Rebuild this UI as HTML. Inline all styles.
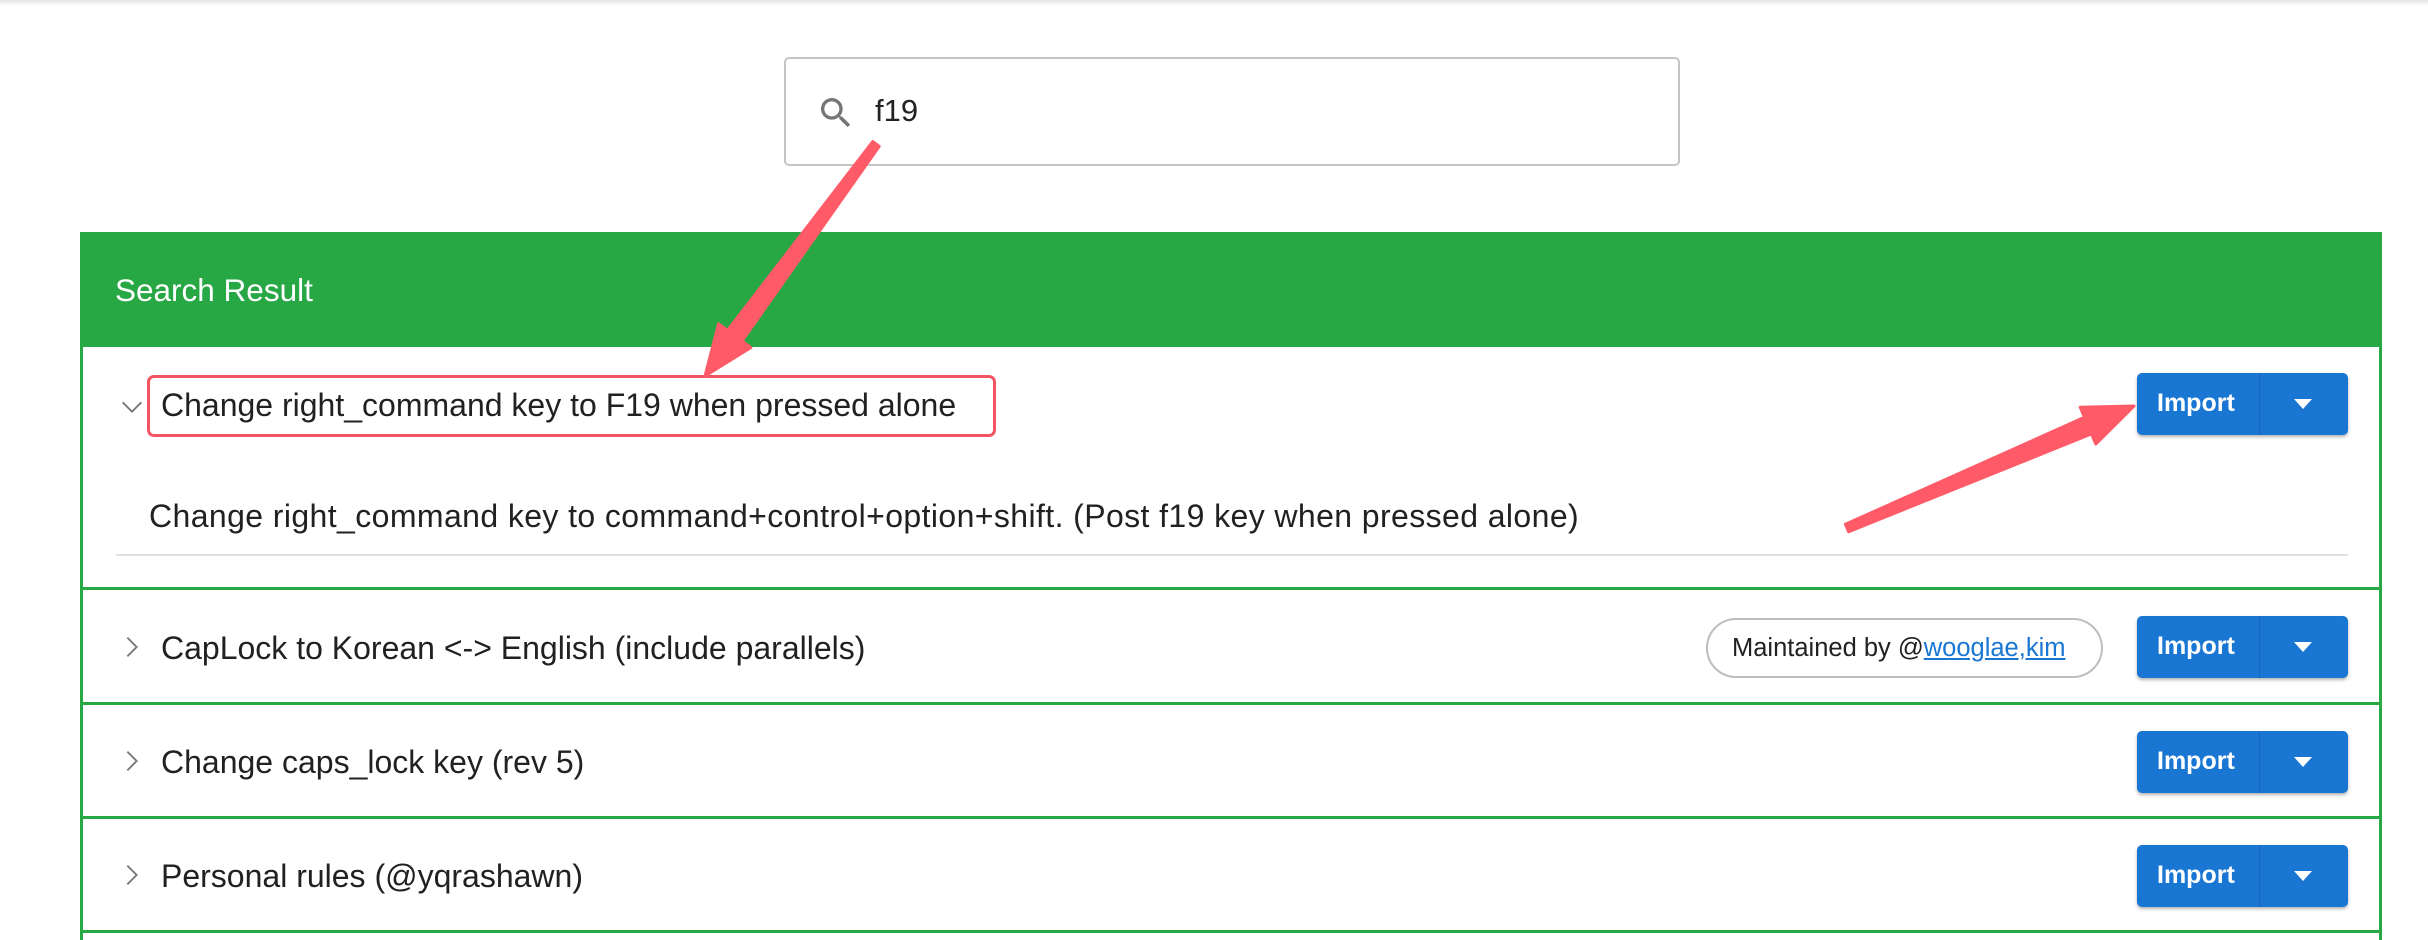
<!DOCTYPE html>
<html><head><meta charset="utf-8"><style>
*{box-sizing:border-box;margin:0;padding:0}
html,body{width:2428px;height:940px;overflow:hidden}
body{background:#fff;font-family:"Liberation Sans",sans-serif;color:#212121;position:relative}
.topbar{position:absolute;left:0;top:0;width:2428px;height:6px;background:linear-gradient(#e6e6e6,#fff)}
.search{position:absolute;left:784px;top:57px;width:896px;height:109px;border:2px solid #c4c4c4;border-radius:5px}
.search svg{position:absolute;left:30px;top:34px}
.search span{position:absolute;left:89px;top:34px;font-size:31px;color:#222}
.panel{position:absolute;left:80px;top:232px;width:2302px;height:708px;border:3px solid #28a745;border-top:none;border-bottom:none}
.hdr{position:absolute;left:80px;top:232px;width:2302px;height:115px;background:#28a745;color:#fff;font-size:31.5px;padding:40px 0 0 35px}
.row{position:absolute;left:80px;width:2302px;border-bottom:3px solid #28a745}
.title{position:absolute;left:81px;font-size:32px;color:#212121;white-space:nowrap}
.chev{position:absolute;left:38px}
.btn{position:absolute;left:2057px;width:211px;height:62px;background:#1976d2;border-radius:5px;box-shadow:0 2px 3px rgba(0,0,0,.3);color:#fff;font-size:25px;font-weight:bold}
.btn .t{position:absolute;left:20px;top:16px}
.btn .d{position:absolute;left:122px;top:0;width:1px;height:62px;background:#1565c0}
.btn .a{position:absolute;left:157px;top:26px;width:0;height:0;border-left:9px solid transparent;border-right:9px solid transparent;border-top:10px solid #fff}
.pill{position:absolute;left:1626px;width:397px;height:60px;border:2px solid #bdbdbd;border-radius:30px;font-size:25.5px;padding:14px 0 0 24px;white-space:nowrap}
.pill a{color:#1976d2;text-decoration:underline}
</style></head><body>
<div class="topbar"></div>
<div class="search">
<svg width="40" height="40" viewBox="0 0 24 24"><path fill="#757575" d="M15.5 14h-.79l-.28-.27A6.47 6.47 0 0 0 16 9.5 6.5 6.5 0 1 0 9.5 16c1.61 0 3.090-.59 4.23-1.57l.27.28v.79l5 4.99L20.490 19l-4.99-5zm-6 0C7.01 14 5 11.99 5 9.5S7.01 5 9.5 5 14 7.01 14 9.5 11.99 14 9.5 14z"/></svg>
<span>f19</span></div>
<div class="panel"></div>
<div class="hdr">Search Result</div>

<div class="row" style="top:347px;height:243px">
<svg class="chev" style="top:46px" width="28" height="28" viewBox="0 0 24 24"><path d="M4 8l8 8 8-8" fill="none" stroke="#777" stroke-width="1.6"/></svg>
<div class="title" style="top:40px">Change right_command key to F19 when pressed alone</div>
<div class="btn" style="top:26px"><span class="t">Import</span><span class="d"></span><span class="a"></span></div>
<div style="position:absolute;left:69px;top:151px;font-size:32px;letter-spacing:0.4px;white-space:nowrap">Change right_command key to command+control+option+shift. (Post f19 key when pressed alone)</div>
<div style="position:absolute;left:36px;top:207px;width:2232px;height:2px;background:#e0e0e0"></div>
</div>
<div style="position:absolute;left:147px;top:375px;width:849px;height:62px;border:3px solid #f25462;border-radius:7px"></div>

<div class="row" style="top:590px;height:115px">
<svg class="chev" style="top:43px" width="28" height="28" viewBox="0 0 24 24"><path d="M8 4l8 8-8 8" fill="none" stroke="#777" stroke-width="1.6"/></svg>
<div class="title" style="top:40px">CapLock to Korean &lt;-&gt; English (include parallels)</div>
<div class="pill" style="top:28px">Maintained by @<a>wooglae,kim</a></div>
<div class="btn" style="top:26px"><span class="t">Import</span><span class="d"></span><span class="a"></span></div>
</div>
<div class="row" style="top:705px;height:114px">
<svg class="chev" style="top:42px" width="28" height="28" viewBox="0 0 24 24"><path d="M8 4l8 8-8 8" fill="none" stroke="#777" stroke-width="1.6"/></svg>
<div class="title" style="top:39px">Change caps_lock key (rev 5)</div>
<div class="btn" style="top:26px"><span class="t">Import</span><span class="d"></span><span class="a"></span></div>
</div>
<div class="row" style="top:819px;height:114px">
<svg class="chev" style="top:42px" width="28" height="28" viewBox="0 0 24 24"><path d="M8 4l8 8-8 8" fill="none" stroke="#777" stroke-width="1.6"/></svg>
<div class="title" style="top:39px">Personal rules (@yqrashawn)</div>
<div class="btn" style="top:26px"><span class="t">Import</span><span class="d"></span><span class="a"></span></div>
</div>

<svg style="position:absolute;left:0;top:0" width="2428" height="940">
<g fill="#ff5a68" stroke="#ff5a68" stroke-width="3" stroke-linejoin="round">
<polygon points="879.2,146.4 742,341 750.8,347.6 705,376 718.6,323.8 727.5,330.4 872.8,141.6"/>
<polygon points="1848.6,531.7 2091.5,433.9 2095.8,444 2134,406 2080.2,407.2 2084.5,417.3 1845.4,524.3"/>
</g></svg>
</body></html>
